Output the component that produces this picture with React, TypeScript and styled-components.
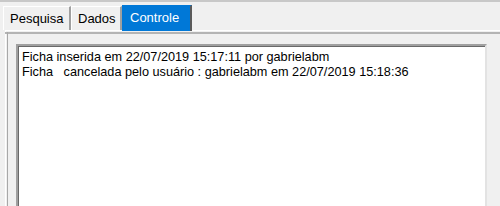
import styled, { createGlobalStyle } from "styled-components";

const GlobalStyle = createGlobalStyle`
  html, body {
    margin: 0;
    padding: 0;
    background: #f0f0f0;
    overflow: hidden;
  }
  body {
    font-family: Tahoma, "Liberation Sans", Arial, sans-serif;
    font-size: 13px;
    color: #000;
  }
`;

const tabs = [
  { label: "Pesquisa", width: 68, active: false },
  { label: "Dados", width: 51, active: false },
  { label: "Controle", width: 70, active: true },
];

const logLines = [
  "Ficha inserida em 22/07/2019 15:17:11 por gabrielabm",
  "Ficha   cancelada pelo usuário : gabrielabm em 22/07/2019 15:18:36",
];

const App = () => {
  return (
    <>
      <GlobalStyle />
      <SWindow>
        <STabStrip>
          {tabs.map((tab) => (
            <STab key={tab.label} $active={tab.active} $width={tab.width}>
              {tab.label}
            </STab>
          ))}
        </STabStrip>
        <SPanel>
          <SMemo>
            {logLines.map((line) => (
              <SLine key={line}>{line}</SLine>
            ))}
          </SMemo>
        </SPanel>
      </SWindow>
    </>
  );
};

const SWindow = styled.div`
  height: 206px;
  border-top: 2px solid #c8c8c8;
  box-sizing: border-box;
  overflow: hidden;
`;

const STabStrip = styled.div`
  display: flex;
  align-items: flex-end;
  height: 28px;
  padding-left: 3px;
  position: relative;
  z-index: 1;
`;

const STab = styled.div<{ $active: boolean; $width: number }>`
  width: ${(p) => p.$width}px;
  height: ${(p) => (p.$active ? "26px" : "24px")};
  box-sizing: border-box;
  padding: ${(p) => (p.$active ? "3px 0 0 7px" : "3px 0 0 6px")};
  margin-bottom: ${(p) => (p.$active ? "-1px" : "0")};
  background: ${(p) => (p.$active ? "#0078d7" : "#f0f0f0")};
  color: ${(p) => (p.$active ? "#ffffff" : "#000000")};
  border-top: 1px solid ${(p) => (p.$active ? "#0078d7" : "#ffffff")};
  border-left: 1px solid ${(p) => (p.$active ? "#0078d7" : "#ffffff")};
  border-right: 2px solid ${(p) => (p.$active ? "#5a5a5a" : "#a0a0a0")};
  font-size: 13px;
  line-height: 18px;
  white-space: nowrap;
`;

const SPanel = styled.div`
  margin-left: 5px;
  width: 520px;
  height: 200px;
  box-sizing: border-box;
  border-top: 1px solid #ffffff;
  border-left: 1px solid #ffffff;
  padding: 13px 0 0 10px;
  position: relative;
  &::before {
    content: "";
    position: absolute;
    left: -1px;
    top: 1px;
    right: 0;
    height: 2px;
    background: #b4b4b4;
  }
  &::after {
    content: "";
    position: absolute;
    left: 1px;
    top: 1px;
    bottom: 0;
    width: 1px;
    background: #a8a8a8;
  }
`;

const SMemo = styled.div`
  width: 471px;
  height: 200px;
  box-sizing: border-box;
  background: #ffffff;
  border-top: 2px solid #a0a0a0;
  border-left: 2px solid #a0a0a0;
  border-right: 2px solid #e3e3e3;
  padding: 4px 0 0 4px;
  box-shadow: inset 1px 1px 0 #696969;
`;

const SLine = styled.div`
  font-size: 12.7px;
  line-height: 15px;
  white-space: pre;
`;

export default App;
